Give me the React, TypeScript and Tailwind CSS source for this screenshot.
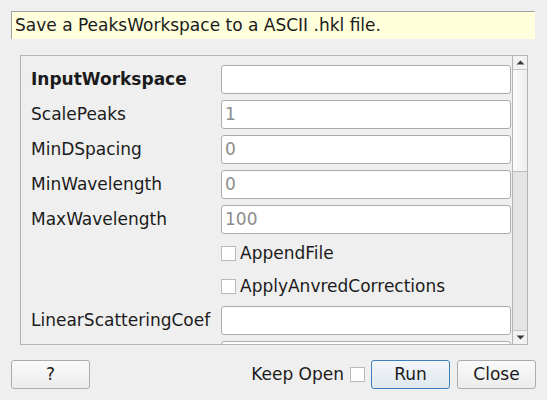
type Field = {
  label: string;
  kind: 'input' | 'check';
  value?: string;
  bold?: boolean;
};

const fields: Field[] = [
  { label: 'InputWorkspace', kind: 'input', bold: true },
  { label: 'ScalePeaks', kind: 'input', value: '1' },
  { label: 'MinDSpacing', kind: 'input', value: '0' },
  { label: 'MinWavelength', kind: 'input', value: '0' },
  { label: 'MaxWavelength', kind: 'input', value: '100' },
  { label: 'AppendFile', kind: 'check' },
  { label: 'ApplyAnvredCorrections', kind: 'check' },
  { label: 'LinearScatteringCoef', kind: 'input' },
  { label: '', kind: 'input' },
];

function CheckBox() {
  return <span className="inline-block h-[15px] w-[15px] shrink-0 border border-[#b9b9b9] bg-white" />;
}

function Row({ field }: { field: Field }) {
  if (field.kind === 'check') {
    return (
      <div className="flex h-[27px] shrink-0 items-center mb-[6px]">
        <div className="w-[190px] shrink-0" />
        <CheckBox />
        <span className="ml-[4px] leading-none">{field.label}</span>
      </div>
    );
  }
  return (
    <div className="flex h-[29px] shrink-0 items-center mb-[6px]">
      <div className={`w-[190px] shrink-0 whitespace-nowrap leading-none ${field.bold ? 'font-bold' : ''}`}>
        {field.label}
      </div>
      <div className="flex h-[29px] w-[290px] shrink-0 items-center rounded-[3px] border border-[#ababab] bg-white pl-[3px] text-[#8c8c8c]">
        {field.value}
      </div>
    </div>
  );
}

function Scrollbar() {
  return (
    <div className="flex w-[15px] shrink-0 flex-col border-l border-[#b4b4b4] bg-[#e4e4e4]">
      <div className="flex h-[14px] shrink-0 items-center justify-center border-b border-[#c8c8c8] bg-[#f2f2f2]">
        <svg width="9" height="5" viewBox="0 0 9 5">
          <path d="M0.5 4.5 L4.5 0.5 L8.5 4.5 Z" fill="#3c3c3c" />
        </svg>
      </div>
      <div className="h-[102px] shrink-0 border-b border-[#b8b8b8] bg-gradient-to-r from-[#fbfbfb] to-[#eeeeee]" />
      <div className="flex-1" />
      <div className="flex h-[14px] shrink-0 items-center justify-center border-t border-[#c8c8c8] bg-[#f2f2f2]">
        <svg width="9" height="5" viewBox="0 0 9 5">
          <path d="M0.5 0.5 L4.5 4.5 L8.5 0.5 Z" fill="#3c3c3c" />
        </svg>
      </div>
    </div>
  );
}

function Button({ children, primary }: { children: React.ReactNode; primary?: boolean }) {
  return (
    <button
      className={`flex h-[29px] w-[79px] items-center justify-center rounded-[3px] border ${
        primary
          ? 'border-[#3d7fbd] bg-gradient-to-b from-[#f3f6f9] to-[#dfe7ef]'
          : 'border-[#acacac] bg-gradient-to-b from-[#fafafa] to-[#ececec]'
      }`}
    >
      {children}
    </button>
  );
}

export default function App() {
  return (
    <div
      className="flex h-[400px] w-[547px] flex-col bg-[#efefef] text-[17px] text-[#1b1b1b]"
      style={{ fontFamily: '"DejaVu Sans", sans-serif' }}
    >
      <div className="ml-[11px] mt-[11px] flex h-[28px] w-[524px] items-center border-l border-t border-[#a2a2a2] bg-[#ffffdc] pl-[3px]">
        Save a PeaksWorkspace to a ASCII .hkl file.
      </div>

      <div className="ml-[20px] mt-[16px] flex h-[290px] w-[508px] border border-[#b4b4b4]">
        <div className="flex flex-1 flex-col overflow-hidden pl-[10px] pt-[9px]">
          {fields.map((f, i) => (
            <Row key={i} field={f} />
          ))}
        </div>
        <Scrollbar />
      </div>

      <div className="mt-[15px] flex items-center px-[11px]">
        <Button>?</Button>
        <div className="flex-1" />
        <span className="mr-[6px]">Keep Open</span>
        <CheckBox />
        <div className="ml-[6px] flex gap-[7px]">
          <Button primary>Run</Button>
          <Button>Close</Button>
        </div>
      </div>
    </div>
  );
}
